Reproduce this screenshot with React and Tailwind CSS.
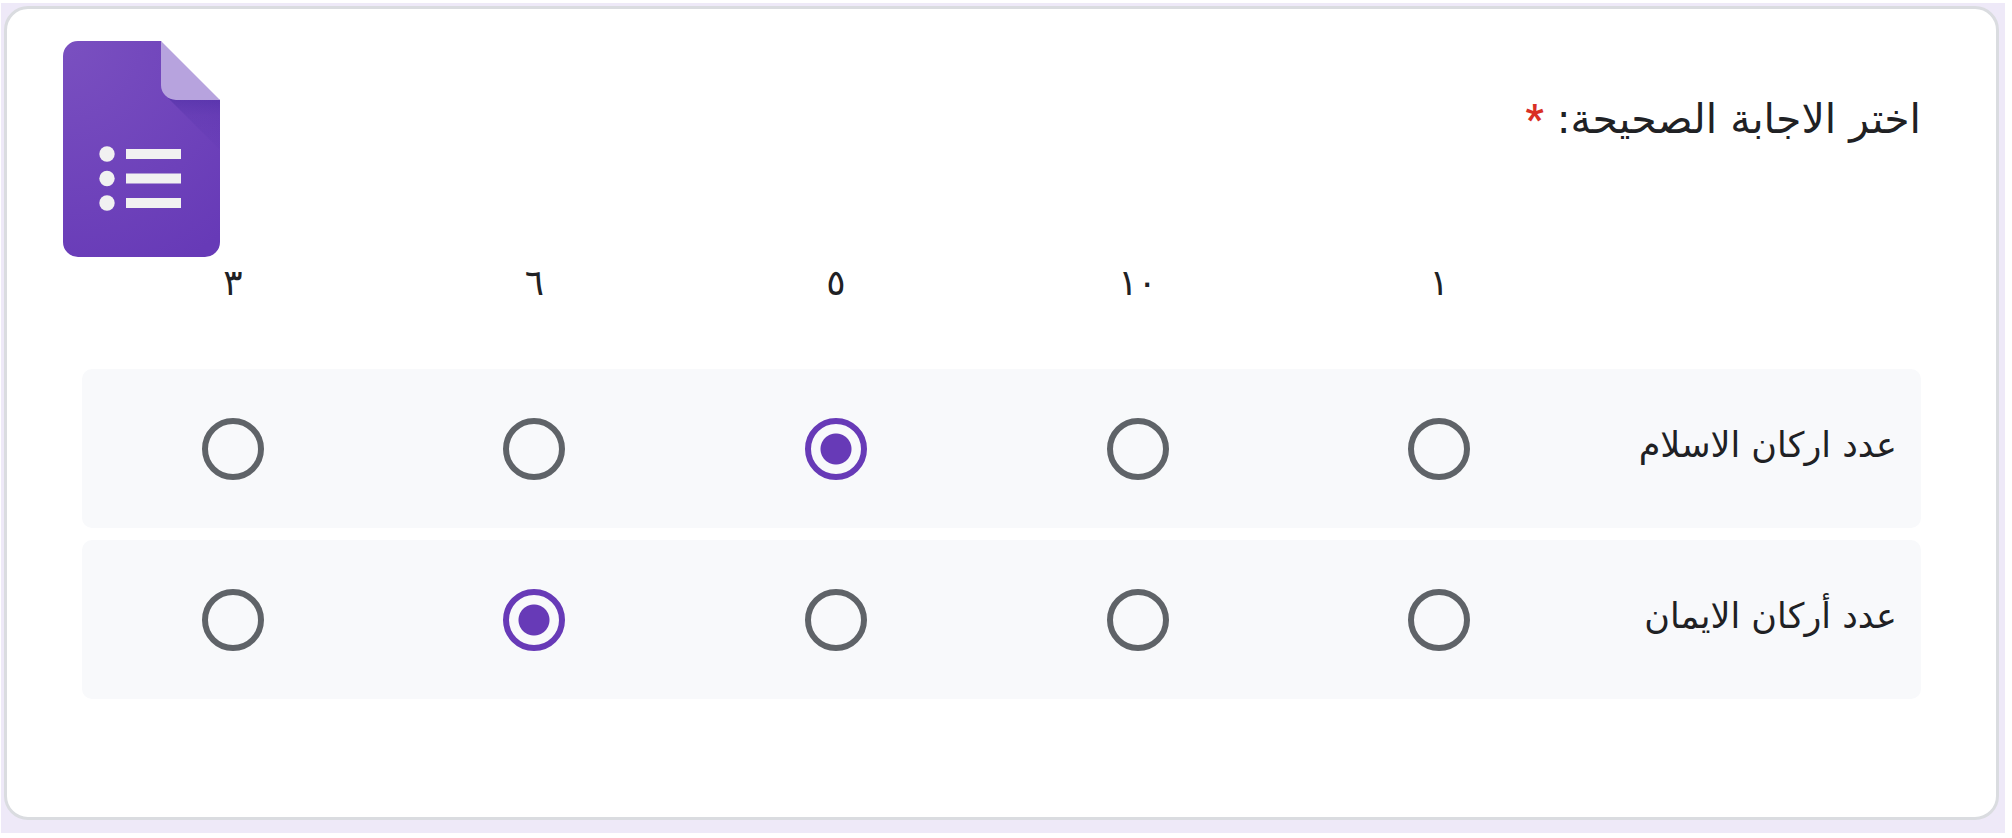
import React, { useState } from 'react';

const columns = ['١', '١٠', '٥', '٦', '٣'];

const questions = [
  { id: 'islam', label: 'عدد اركان الاسلام', answer: '٥' },
  { id: 'iman', label: 'عدد أركان الايمان', answer: '٦' },
];

const FormsLogo = () => (
  <svg className="w-[157px] h-[216px] shrink-0" viewBox="0 0 157 216" role="img" aria-label="Google Forms">
    <defs>
      <radialGradient id="page" cx="0" cy="0" r="250" gradientUnits="userSpaceOnUse">
        <stop offset="0" stopColor="#7a50c0" />
        <stop offset="1" stopColor="#673ab7" />
      </radialGradient>
      <linearGradient id="shade" x1="0" y1="59" x2="0" y2="110" gradientUnits="userSpaceOnUse">
        <stop offset="0" stopColor="#311b92" stopOpacity="0.3" />
        <stop offset="0.3" stopColor="#311b92" stopOpacity="0.12" />
        <stop offset="1" stopColor="#311b92" stopOpacity="0.02" />
      </linearGradient>
    </defs>
    <path d="M98 0H15A15 15 0 0 0 0 15V201A15 15 0 0 0 15 216H142A15 15 0 0 0 157 201V59L118 39Z" fill="url(#page)" />
    <path d="M102 54L157 109V59Z" fill="url(#shade)" />
    <path d="M98 0V44A15 15 0 0 0 113 59H157Z" fill="#b7a3de" />
    <g fill="#f1f1f1">
      <circle cx="44" cy="113" r="7.7" />
      <circle cx="44" cy="137.5" r="7.7" />
      <circle cx="44" cy="162" r="7.7" />
      <rect x="63" y="108" width="55" height="10" />
      <rect x="63" y="132.5" width="55" height="10" />
      <rect x="63" y="157" width="55" height="10" />
    </g>
  </svg>
);

const GridRadio = ({ name, value, label, checked, onChange }) => (
  <input
    type="radio"
    name={name}
    value={value}
    aria-label={label}
    checked={checked}
    onChange={onChange}
    className="block mx-auto size-[62px] appearance-none rounded-full border-6 border-[#5f6368] cursor-pointer checked:border-[#673ab7] checked:bg-[radial-gradient(circle,#673ab7_15px,transparent_16px)]"
  />
);

const App = () => {
  const [answers, setAnswers] = useState(
    Object.fromEntries(questions.map((q) => [q.id, q.answer]))
  );

  return (
    <div
      dir="rtl"
      lang="ar"
      className="bg-white pt-[3px] pb-[5px] pl-px pr-[7px] font-['DejaVu_Sans',sans-serif] text-[#202124]"
    >
      <main className="bg-[#eee9f8] pt-[3px] pb-[13px] pl-[3px] pr-1.5">
        <form className="rounded-[24px] border-3 border-[#dadce0] bg-white pt-8 pb-[106px]">
          <header className="flex items-start justify-between pr-[75px] pl-[56px]">
            <h1 id="question" className="pt-[50px] text-[41px] leading-[56px]">
              اختر الاجابة الصحيحة:{' '}
              <span className="font-['Roboto',sans-serif] text-[40px] font-bold text-[#d93025]">*</span>
            </h1>
            <FormsLogo />
          </header>

          <div className="pr-[75px] pl-[75px]">
            <table aria-labelledby="question" className="w-full table-fixed border-separate border-spacing-x-0 border-spacing-y-[12px]">
              <thead>
                <tr className="h-[88px] align-top">
                  <td className="w-[18%]"></td>
                  {columns.map((column) => (
                    <th key={column} scope="col" className="p-0 text-[36px] leading-[28px] font-normal">
                      {column}
                    </th>
                  ))}
                </tr>
              </thead>
              <tbody>
                {questions.map((question) => (
                  <tr key={question.id} className="h-[159px] bg-[#f8f9fb]">
                    <th scope="row" className="rounded-r-[10px] p-0 pr-6 pb-2 text-start text-[35px] leading-[40px] font-normal whitespace-nowrap">
                      {question.label}
                    </th>
                    {columns.map((column) => (
                      <td key={column} className="p-0 last:rounded-l-[10px]">
                        <GridRadio
                          name={question.id}
                          value={column}
                          label={`${question.label} ${column}`}
                          checked={answers[question.id] === column}
                          onChange={() => setAnswers({ ...answers, [question.id]: column })}
                        />
                      </td>
                    ))}
                  </tr>
                ))}
              </tbody>
            </table>
          </div>
        </form>
      </main>
    </div>
  );
};

export default App;
